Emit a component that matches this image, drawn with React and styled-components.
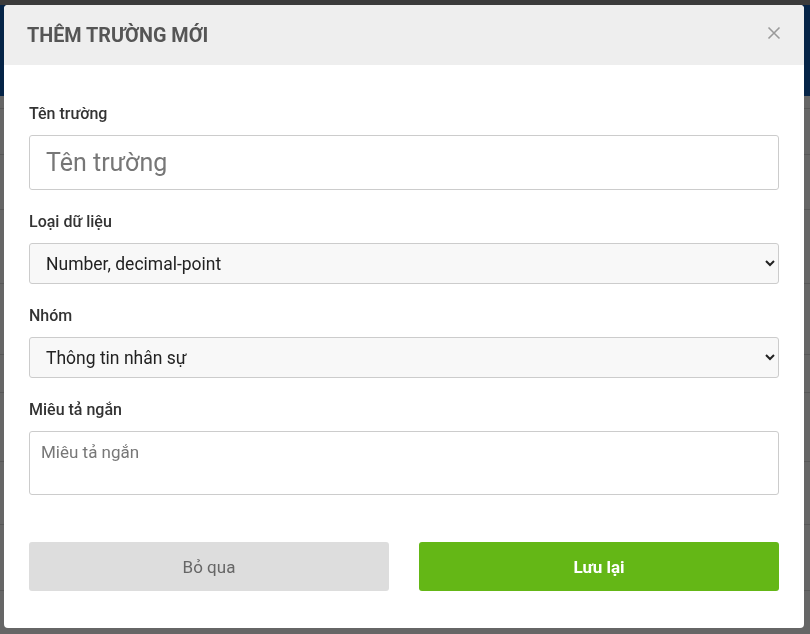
import React from "react";
import styled, { createGlobalStyle } from "styled-components";

const GlobalStyle = createGlobalStyle`
  html, body {
    margin: 0;
    padding: 0;
    height: 100%;
    font-family: Roboto, "Noto Sans", "Liberation Sans", sans-serif;
  }
  #root {
    height: 100%;
  }
`;

// --- page behind the dialog ---
const Page = styled.div`
  height: 100%;
  background: #ffffff;
  overflow: hidden;
`;

const TopBar = styled.div`
  height: 5px;
  background: #959595;
`;

const Header = styled.div`
  height: 91px;
  background: #0e5bb2;
`;

const Row = styled.div`
  height: ${(p) => p.h}px;
  border-bottom: 1px solid #dcdcdc;
  padding-left: 12px;
  font-size: 17px;
  color: #333;
  display: flex;
  align-items: flex-end;
`;

// --- dialog ---
const Overlay = styled.div`
  position: fixed;
  inset: 0;
  background: rgba(0, 0, 0, 0.6);
  padding: 5px 0 0 4px;
`;

const Modal = styled.div`
  width: 800px;
  background: #ffffff;
  border-radius: 4px;
  overflow: hidden;
`;

const ModalHeader = styled.div`
  height: 60px;
  background: #eeeeee;
  display: flex;
  align-items: center;
  justify-content: space-between;
  padding: 0 23px;
`;

const Title = styled.h4`
  margin: 0;
  font-size: 19.8px;
  font-weight: 700;
  color: #555555;
  padding-top: 1px;
`;

const CloseButton = styled.button`
  border: none;
  background: transparent;
  padding: 0;
  width: 14px;
  height: 14px;
  margin-top: -5px;
  cursor: pointer;
  display: flex;
`;

const ModalBody = styled.div`
  padding: 39px 25px 0;
`;

const FormGroup = styled.div`
  margin-bottom: 22px;
  &:last-child {
    margin-bottom: 0;
  }
`;

const Label = styled.label`
  display: block;
  font-size: 16px;
  line-height: 20px;
  font-weight: 500;
  color: #333333;
  margin-bottom: 11px;
`;

const TextInput = styled.input`
  box-sizing: border-box;
  width: 100%;
  height: 55px;
  border: 1px solid #cccccc;
  border-radius: 3px;
  padding: 0 16px;
  font-family: inherit;
  font-size: 25px;
  color: #333;
  outline: none;
  &::placeholder {
    color: #777777;
  }
`;

const Select = styled.select`
  box-sizing: border-box;
  width: 100%;
  height: 41px;
  border: 1px solid #cccccc;
  border-radius: 3px;
  background: #f8f8f8;
  padding: 0 12px 0 12px;
  font-family: inherit;
  font-size: 17.5px;
  color: #222222;
  outline: none;
`;

const TextArea = styled.textarea`
  box-sizing: border-box;
  display: block;
  width: 100%;
  height: 64px;
  border: 1px solid #cccccc;
  border-radius: 3px;
  padding: 9px 11px;
  font-family: inherit;
  font-size: 17px;
  line-height: 22px;
  resize: none;
  outline: none;
  &::placeholder {
    color: #777777;
  }
`;

const Footer = styled.div`
  display: grid;
  grid-template-columns: 1fr 1fr;
  column-gap: 30px;
  padding: 47px 25px 37px;
`;

const Button = styled.button`
  height: 49px;
  border: none;
  border-radius: 3px;
  font-family: inherit;
  font-size: 17px;
  cursor: pointer;
  background: ${(p) => (p.$primary ? "#64b716" : "#dddddd")};
  color: ${(p) => (p.$primary ? "#ffffff" : "#666666")};
  font-weight: ${(p) => (p.$primary ? 700 : 400)};
`;

const CloseIcon = () => (
  <svg width="14" height="14" viewBox="0 0 14 14">
    <path d="M1.5 1.5 L12.5 12.5 M12.5 1.5 L1.5 12.5" stroke="#9a9a9a" strokeWidth="1.6" fill="none" />
  </svg>
);

const rows = [12, 45, 54, 73, 70, 37, 68, 62, 65, 60, 33];

export default function App() {
  return (
    <>
      <GlobalStyle />
      <Page>
        <TopBar />
        <Header />
        {rows.map((h, i) => (
          <Row key={i} h={h}>
            {i === rows.length - 1 ? "— Không có miêu tả" : ""}
          </Row>
        ))}
      </Page>
      <Overlay>
        <Modal>
          <ModalHeader>
            <Title>THÊM TRƯỜNG MỚI</Title>
            <CloseButton aria-label="Đóng">
              <CloseIcon />
            </CloseButton>
          </ModalHeader>
          <ModalBody>
            <FormGroup>
              <Label>Tên trường</Label>
              <TextInput placeholder="Tên trường" />
            </FormGroup>
            <FormGroup>
              <Label>Loại dữ liệu</Label>
              <Select defaultValue="decimal">
                <option value="text">Text</option>
                <option value="integer">Number, integer</option>
                <option value="decimal">Number, decimal-point</option>
                <option value="date">Date</option>
              </Select>
            </FormGroup>
            <FormGroup>
              <Label>Nhóm</Label>
              <Select defaultValue="hr">
                <option value="hr">Thông tin nhân sự</option>
                <option value="other">Khác</option>
              </Select>
            </FormGroup>
            <FormGroup>
              <Label>Miêu tả ngắn</Label>
              <TextArea placeholder="Miêu tả ngắn" />
            </FormGroup>
          </ModalBody>
          <Footer>
            <Button>Bỏ qua</Button>
            <Button $primary>Lưu lại</Button>
          </Footer>
        </Modal>
      </Overlay>
    </>
  );
}
